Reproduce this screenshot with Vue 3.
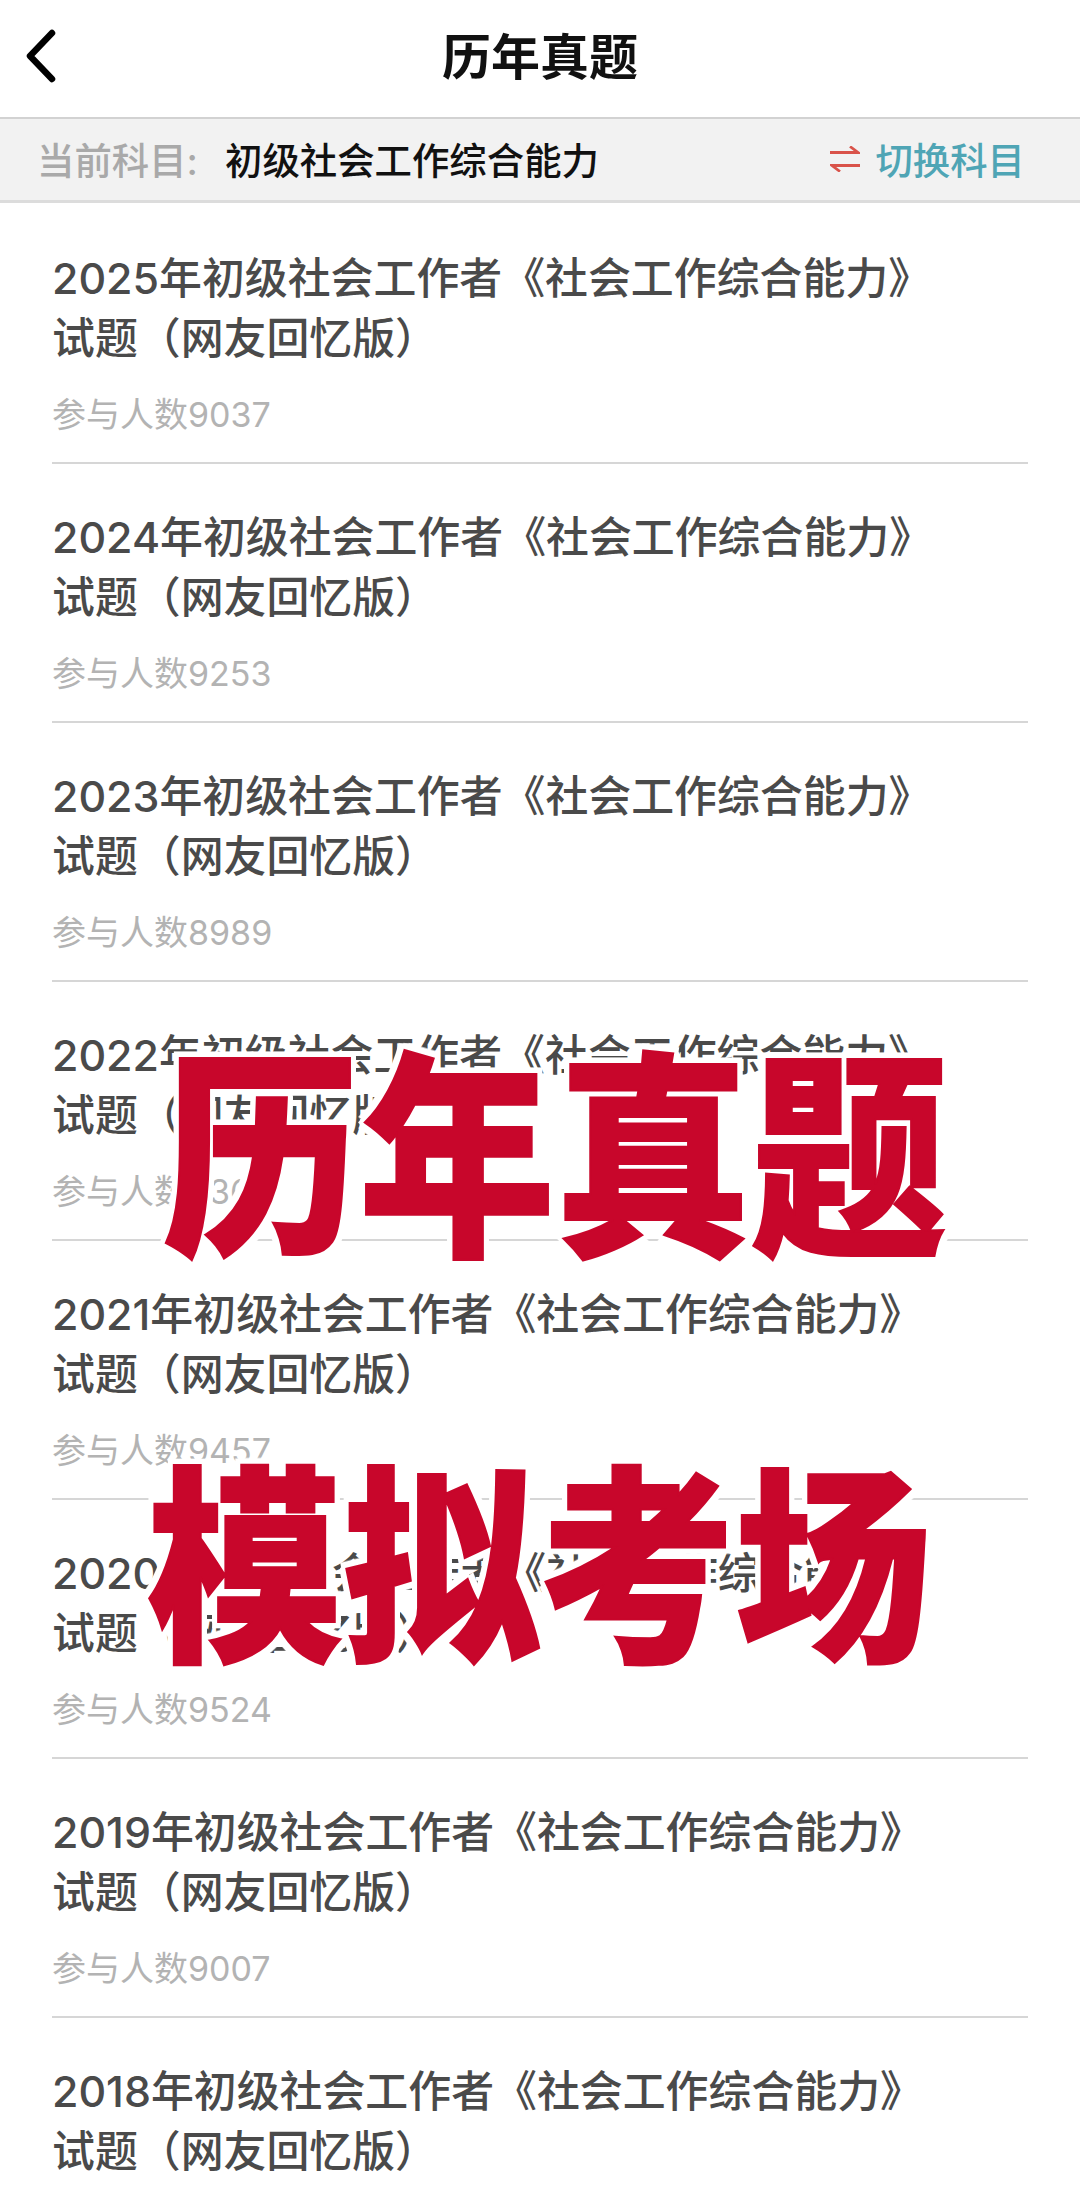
<script setup>
const items = [
  { year: 2025, count: 9037 },
  { year: 2024, count: 9253 },
  { year: 2023, count: 8989 },
  { year: 2022, count: 9360 },
  { year: 2021, count: 9457 },
  { year: 2020, count: 9524 },
  { year: 2019, count: 9007 },
  { year: 2018, count: 9112 },
]
</script>

<template>
  <div class="page">
    <header class="topbar">
      <svg class="back" width="36" height="56" viewBox="0 0 36 56">
        <path d="M30 5 L8 28 L30 51" fill="none" stroke="#000" stroke-width="6.5" stroke-linecap="round" stroke-linejoin="round" />
      </svg>
      <h1>历年真题</h1>
    </header>

    <div class="subject">
      <span class="label">当前科目:</span>
      <span class="name">初级社会工作综合能力</span>
      <span class="switch">
        <svg width="30" height="26" viewBox="0 0 30 26">
          <path d="M0 6.5 H28 L20 0.5" fill="none" stroke="#d9534a" stroke-width="2.8" />
          <path d="M30 19.5 H2 L10 25.5" fill="none" stroke="#d9534a" stroke-width="2.8" />
        </svg>
        <span>切换科目</span>
      </span>
    </div>

    <ul class="list">
      <li v-for="item in items" :key="item.year" class="row">
        <div class="title">{{ item.year }}年初级社会工作者《社会工作综合能力》</div>
        <div class="title">试题（网友回忆版）</div>
        <div class="meta">参与人数{{ item.count }}</div>
      </li>
    </ul>

    <div class="stamp stamp-one">历年真题</div>
    <div class="stamp stamp-two">模拟考场</div>
  </div>
</template>

<style>
html, body {
  margin: 0;
  background: #fff;
}
</style>

<style scoped>
.page {
  position: relative;
  height: 2202px;
  overflow: hidden;
  background: #fff;
  font-family: Inter, "Noto Sans CJK SC", sans-serif;
}

.topbar {
  height: 119px;
  padding-bottom: 10px;
  box-sizing: border-box;
  display: flex;
  align-items: center;
  justify-content: center;
  position: relative;
  border-bottom: 2px solid #d2d2d2;
}

.topbar h1 {
  margin: 0;
  font-size: 49px;
  font-weight: 700;
  color: #111;
}

.back {
  position: absolute;
  left: 22px;
  top: 28px;
}

.subject {
  height: 84px;
  box-sizing: border-box;
  padding: 0 55px 2px 37px;
  display: flex;
  align-items: center;
  background: #f2f2f2;
  border-bottom: 3px solid #dcdcdc;
  font-size: 37.4px;
  font-weight: 500;
}

.label {
  color: #a9a9a9;
  width: 188px;
}

.name {
  color: #111;
}

.switch {
  margin-left: auto;
  display: flex;
  align-items: center;
  gap: 15px;
  color: #4fa5b5;
}

.list {
  list-style: none;
  margin: 0;
  padding: 2px 0 0;
}

.row {
  margin-left: 52px;
  margin-right: 52px;
  padding: 43px 0 24px;
  border-bottom: 2px solid #d6d6d6;
}

.title {
  font-size: 42.9px;
  font-weight: 500;
  line-height: 60px;
  color: #4a4a4a;
  white-space: nowrap;
}

.meta {
  margin-top: 24px;
  font-size: 34px;
  line-height: 46px;
  color: #b3b3b3;
}

.stamp {
  position: absolute;
  white-space: nowrap;
  font-family: "Noto Sans CJK SC", sans-serif;
  font-weight: 900;
  color: #c8062b;
  -webkit-text-stroke: 2px #c8062b;
  line-height: 1;
  font-size: 196px;
  transform-origin: top left;
  filter: drop-shadow(5px 0 0 #fff) drop-shadow(-5px 0 0 #fff) drop-shadow(0 5px 0 #fff) drop-shadow(0 -5px 0 #fff);
}

.stamp-one {
  left: 163px;
  top: 1034px;
  transform: scaleY(1.12);
}

.stamp-two {
  left: 147px;
  top: 1449px;
  transform: scaleY(1.07);
}
</style>
